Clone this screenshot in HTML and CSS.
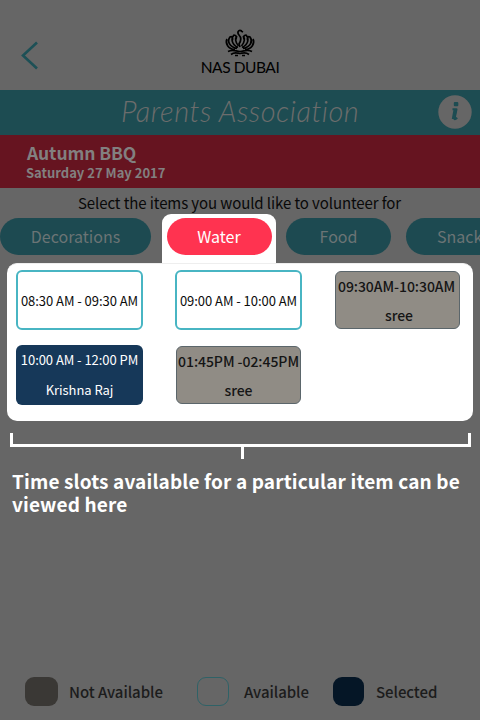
FILE: index.html
```html
<!DOCTYPE html>
<html lang="en">
<head>
<meta charset="utf-8">
<title>Parents Association</title>
<link rel="stylesheet" href="styles.css">
</head>
<body>
<header class="top">
  <svg class="back" width="18" height="30" viewBox="0 0 18 30"><path d="M16 1.500 2 14.500 16 27.500" fill="none" stroke="#1d5056" stroke-width="2.600"/></svg>
  <div class="brand">
    <svg width="32" height="28" viewBox="0 0 32 28" fill="none" stroke="#000" stroke-width="1.700">
      <path d="M14.500 17C11 13 11 9 13 7M17.500 17C21 13 21 9 19 7M14 18.500C7 15 7 9 10 6C12 6 13 8 12 10M18 18.500C25 15 25 9 22 6C20 6 19 8 20 10M13 19.500C5 18 3 12 6 8C8 7 9 9 8.500 11M19 19.500C27 18 29 12 26 8C24 7 23 9 23.500 11M11 20.500C4 20.500 1 14 3 10M21 20.500C28 20.500 31 14 29 10"/>
      <path d="M18 2C14 0 13 4 15 6C18 9 17 12 15 15L16 18M17 2l2 1M4 22.500C9 20 12 22.500 16 22.500S23 20 28 22.500M7 25.500C11 22.500 14 24.500 16 24.500S21 22.500 25 25.500M11 26.500h3M18 26.500h3"/>
    </svg>
    <span class="brand-name">NAS DUBAI</span>
  </div>
</header>
<section class="title-bar">
  <h1>Parents Association</h1>
  <svg class="info" width="34" height="34" viewBox="0 0 34 34"><circle cx="17" cy="17" r="16.700" fill="#666"/><rect x="15.800" y="7" width="4.500" height="4.300" rx="1" fill="#1d4c52"/><path d="M14.500 14.300h4l-2 9.800q1 .3 2.700-1.300" fill="none" stroke="#1d4c52" stroke-width="2" stroke-linejoin="round"/><path d="M15.500 14.500h3.500l-2 9.500h-3.200z" fill="#1d4c52"/></svg>
</section>
<section class="event">
  <h2>Autumn BBQ</h2>
  <p>Saturday 27 May 2017</p>
</section>
<p class="prompt"><span>Select the items you would like to volunteer for</span></p>
<nav class="tabs">
  <div class="tab wide"><span>Decorations</span></div>
  <div class="spot"><div class="tab active"><span>Water</span></div></div>
  <div class="tab"><span>Food</span></div>
  <div class="tab last"><span>Snacks</span></div>
</nav>
<main class="panel">
  <div class="slot open"><span>08:30 AM - 09:30 AM</span></div>
  <div class="slot open"><span>09:00 AM - 10:00 AM</span></div>
  <div class="slot taken"><span class="early">09:30AM-10:30AM</span><span class="who">sree</span></div>
  <div class="slot mine"><span>10:00 AM - 12:00 PM</span><span>Krishna Raj</span></div>
  <div class="slot taken"><span>01:45PM -02:45PM</span><span>sree</span></div>
</main>
<div class="bracket"><div class="arms"></div><div class="stem"></div></div>
<p class="caption"><span>Time slots available for a particular item can be</span><br><span>viewed here</span></p>
<footer class="legend">
  <i class="swatch na"></i><span class="l1">Not Available</span>
  <i class="swatch av"></i><span class="l2">Available</span>
  <i class="swatch se"></i><span class="l3">Selected</span>
</footer>
</body>
</html>
```
FILE: styles.css
```css
* { box-sizing: border-box; margin: 0; padding: 0; }
body {
  width: 480px; height: 720px; overflow: hidden;
  display: flex; flex-direction: column;
  background: #666; color: #090909;
  font-family: "Noto Sans CJK SC", "Noto Sans", sans-serif;
  white-space: nowrap;
}
.top { height: 90px; flex: none; display: flex; padding-left: 21px; }
.back { margin-top: 41px; }
.brand { margin: 29px 0 0 162px; width: 78px; display: flex; flex-direction: column; align-items: center; }
.brand-name { font: 15.500px/18px Lato, sans-serif; color: #000; margin-top: 1px; letter-spacing: -.45px; }
.title-bar { height: 45px; flex: none; background: #1d4c52; display: flex; padding-left: 121px; }
.title-bar h1 { width: 317px; font: italic 300 29px/42px Lato, sans-serif; color: #6c6c6c; letter-spacing: .5px; }
.info { margin-top: 5px; }
.event { height: 53px; flex: none; background: #661420; color: #828080; padding: 7px 0 0 26px; }
.event h2 { font-size: 17.500px; line-height: 22px; font-weight: 700; padding-left: 1px; letter-spacing: -.1px; }
.event p { font-size: 13px; line-height: 18px; font-weight: 700; }
.prompt { height: 26px; flex: none; padding-left: 78px; font-size: 15px; line-height: 30px; letter-spacing: -.09px; }
.tabs { width: 480px; height: 49px; flex: none; display: flex; align-items: flex-start; overflow: hidden; }
.tab { height: 37px; width: 105px; flex: none; margin-top: 4px; border-radius: 19px; background: #1d4a51; color: #6b7475; font-size: 16px; line-height: 37px; text-align: center; }
.wide { width: 151px; }
.spot { width: 114px; height: 49px; flex: none; margin: 0 10px 0 11px; padding-left: 4.500px; background: #fff; border-radius: 9px 9px 0 0; }
.active { background: #ff3350; color: #fff; }
.last { width: 120px; margin-left: 15px; text-align: left; padding-left: 31px; }
.panel {
  height: 158px; flex: none; margin: 0 7px; background: #fff; border-radius: 10px; border-top: 1px solid #eee;
  padding: 6px 12px 0 9px; display: grid; grid-template-columns: 127px 127px 127px;
  grid-template-rows: 60px 60px; column-gap: 32px; row-gap: 15px;
}
.slot { border-radius: 6px; display: flex; flex-direction: column; align-items: center; font-size: 13px; line-height: 30px; letter-spacing: -.05px; color: #0c0c0c; }
.open { border: 2px solid #48b5c3; line-height: 57px; }
.taken { margin: 1px; border: 1px solid #5b666b; background: #908c85; font-weight: 500; font-size: 14px; line-height: 29px; color: #151515; }
.early { margin-right: 2px; }
.who { margin-left: 3px; }
.mine { background: #163859; color: #fff; }
.bracket { height: 26px; flex: none; margin: 12px 9px 0 10px; display: flex; flex-direction: column; align-items: center; }
.arms { width: 461px; height: 14px; border: 3px solid #fff; border-top: 0; }
.stem { width: 3px; height: 12px; background: #fff; margin-left: 3px; }
.caption { flex: none; margin: 10px 0 0 12px; color: #fff; font-size: 19px; line-height: 23px; font-weight: 700; letter-spacing: .14px; }
.legend { margin-top: auto; margin-bottom: 14px; height: 29px; display: flex; align-items: center; padding-left: 25px; font-size: 15px; font-weight: 500; color: #1c1c1c; letter-spacing: -.06px; }
.swatch { width: 33px; height: 29px; border-radius: 9px; flex: none; }
.na { background: #3a3835; }
.av { width: 32px; border: 1px solid #2f6267; }
.se { width: 31px; background: #051626; }
.l1 { width: 128px; margin-left: 11px; }
.l2 { width: 89px; margin-left: 15px; }
.l3 { margin-left: 12px; }
```
